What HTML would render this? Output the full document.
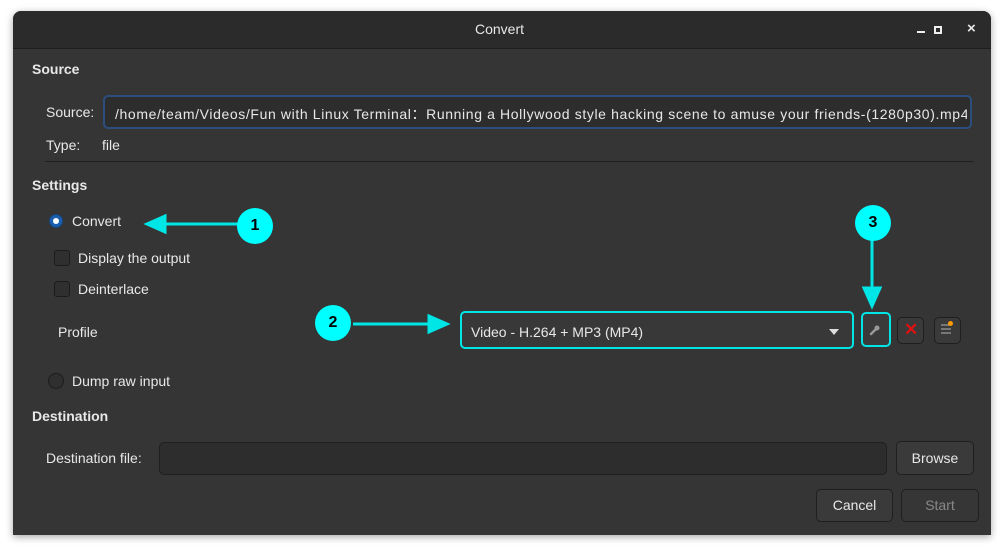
<!DOCTYPE html>
<html><head><style>
body{margin:0;width:1004px;height:551px;background:#fff;position:relative;overflow:hidden;font-family:"Liberation Sans",sans-serif;font-size:14px;color:#e8e8e8}
.a{position:absolute;white-space:nowrap}
.win{position:absolute;left:13px;top:11px;width:978px;height:524px;background:#353535;border-radius:8px 8px 0 0;box-shadow:0 2px 8px rgba(0,0,0,.35);overflow:hidden}
.tb{position:absolute;left:0;top:0;width:978px;height:37px;background:#2b2b2b;border-bottom:1px solid #1e1e1e}
.b{font-weight:bold}
.field{position:absolute;background:#2d2d2d;border:1px solid #1f1f1f;border-radius:5px;box-sizing:border-box}
.btn{position:absolute;background:#3a3a3a;border:1px solid #1f1f1f;border-radius:5px;box-sizing:border-box;text-align:center}
.cb{position:absolute;width:16px;height:16px;border:1px solid #1c1c1c;background:#2f2f2f;border-radius:3px;box-sizing:border-box}
.circ{position:absolute;width:36px;height:36px;border-radius:50%;background:#00ffff;color:#000;font-weight:bold;font-size:16px;text-align:center;line-height:36px}
</style></head><body>
<div class="win">
 <div class="tb"></div>
 <div class="a" style="left:462px;top:10px">Convert</div>
 <div class="a" style="left:904px;top:20px;width:8px;height:2px;background:#eee"></div>
 <div class="a" style="left:921px;top:15px;width:8px;height:8px;border:2px solid #eee;box-sizing:border-box"></div>
 <div class="a" style="left:954px;top:9px;font-size:15px;font-weight:bold">&#215;</div>

 <div class="a b" style="left:19px;top:50px">Source</div>
 <div class="a" style="left:33px;top:93px">Source:</div>
 <div class="field" style="left:90px;top:84px;width:869px;height:34px;border:2px solid #2a4f7c"></div>
 <div class="a" style="left:102px;top:93px;width:852px;overflow:hidden;font-size:14px;letter-spacing:0.62px">/home/team/Videos/Fun with Linux Terminal：Running a Hollywood style hacking scene to amuse your friends-(1280p30).mp4</div>
 <div class="a" style="left:33px;top:126px">Type:</div>
 <div class="a" style="left:89px;top:126px">file</div>
 <div class="a" style="left:32px;top:150px;width:929px;height:1px;background:#202020"></div>

 <div class="a b" style="left:19px;top:166px">Settings</div>
 <div class="a" style="left:36px;top:203px;width:14px;height:14px;border-radius:50%;background:#1b5fb0;border:1px solid #15467f;box-sizing:border-box"></div>
 <div class="a" style="left:40px;top:207px;width:6px;height:6px;border-radius:50%;background:#fff"></div>
 <div class="a" style="left:59px;top:202px">Convert</div>
 <div class="cb" style="left:41px;top:239px"></div>
 <div class="a" style="left:65px;top:239px">Display the output</div>
 <div class="cb" style="left:41px;top:270px"></div>
 <div class="a" style="left:65px;top:270px">Deinterlace</div>
 <div class="a" style="left:45px;top:313px">Profile</div>
 <div class="a" style="left:35px;top:362px;width:16px;height:16px;border-radius:50%;background:#2f2f2f;border:1px solid #1c1c1c;box-sizing:border-box"></div>
 <div class="a" style="left:59px;top:362px">Dump raw input</div>

 <div class="btn" style="left:447px;top:300px;width:394px;height:38px;border:2px solid #00e5e5;background:#383838"></div>
 <div class="a" style="left:458px;top:313px">Video - H.264 + MP3 (MP4)</div>
 <div class="a" style="left:816px;top:318px;width:0;height:0;border-left:5px solid transparent;border-right:5px solid transparent;border-top:6px solid #ddd"></div>
 <div class="btn" style="left:848px;top:301px;width:30px;height:35px;border:2px solid #00e5e5"></div>
 <svg class="a" style="left:855px;top:312px" width="14" height="14" viewBox="0 0 14 14"><path d="M3 11 L8 6" stroke="#999" stroke-width="2.5" stroke-linecap="round"/><circle cx="9" cy="5" r="2.5" fill="#999"/></svg>
 <div class="btn" style="left:884px;top:306px;width:27px;height:27px"></div>
 <div class="a" style="left:891px;top:309px;color:#d11;font-weight:bold;font-size:17px">&#10005;</div>
 <div class="btn" style="left:921px;top:306px;width:27px;height:27px"></div>
 <div class="a" style="left:928px;top:313px;width:10px;height:12px;background:repeating-linear-gradient(#777 0 2px,transparent 2px 4px)"></div>
 <div class="a" style="left:935px;top:310px;width:5px;height:5px;border-radius:50%;background:#f90"></div>

 <div class="a b" style="left:19px;top:397px">Destination</div>
 <div class="a" style="left:33px;top:439px">Destination file:</div>
 <div class="field" style="left:146px;top:431px;width:728px;height:33px"></div>
 <div class="btn" style="left:883px;top:430px;width:78px;height:34px;line-height:32px">Browse</div>
 <div class="btn" style="left:803px;top:478px;width:77px;height:33px;line-height:31px">Cancel</div>
 <div class="btn" style="left:888px;top:478px;width:78px;height:33px;line-height:31px;color:#888;background:#363636">Start</div>

 <svg class="a" style="left:0;top:0" width="978" height="524">
  <g stroke="#00e5e5" stroke-width="3" fill="#00e5e5">
   <line x1="148" y1="213" x2="228" y2="213"/><path d="M134 213 L152 205 L152 221 Z"/>
   <line x1="340" y1="313" x2="420" y2="313"/><path d="M434 313 L416 305 L416 321 Z"/>
   <line x1="859" y1="225" x2="859" y2="280"/><path d="M859 295 L851 277 L867 277 Z"/>
  </g>
 </svg>
 <div class="circ" style="left:224px;top:197px">1</div>
 <div class="circ" style="left:302px;top:294px">2</div>
 <div class="circ" style="left:842px;top:194px">3</div>
</div>
</body></html>
